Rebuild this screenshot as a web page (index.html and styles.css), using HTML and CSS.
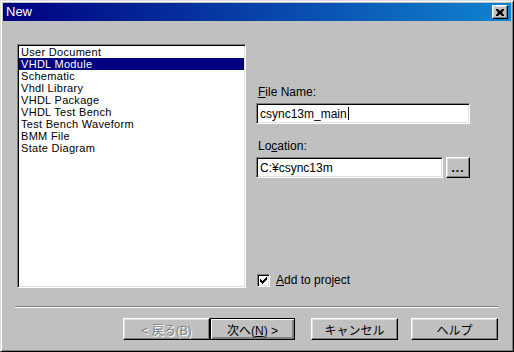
FILE: index.html
```html
<!DOCTYPE html>
<html lang="ja">
<head>
  <meta charset="UTF-8" />
  <title>New</title>
  <link rel="stylesheet" href="styles.css">
</head>
<body>
  <div class="window">
    <div class="titlebar">
      <span class="title">New</span>
      <button class="close-btn">
        <svg width="8" height="7" viewBox="0 0 8 7"><path d="M0 0h2l2 2 2-2h2v1L6 3.5 8 6v1H6L4 5 2 7H0V6l2-2.5L0 1z" fill="#000"/></svg>
      </button>
    </div>

    <div class="dialog-body">
      <div class="main">
        <ul class="listbox">
          <li>User Document</li>
          <li class="selected">VHDL Module</li>
          <li>Schematic</li>
          <li>Vhdl Library</li>
          <li>VHDL Package</li>
          <li>VHDL Test Bench</li>
          <li>Test Bench Waveform</li>
          <li>BMM File</li>
          <li>State Diagram</li>
        </ul>

        <div class="side">
          <label class="label"><u>F</u>ile Name:</label>
          <div class="field">csync13m_main<span class="caret"></span></div>

          <label class="label location-label">Lo<u>c</u>ation:</label>
          <div class="field-row">
            <div class="field short">C:¥csync13m</div>
            <button class="btn browse">...</button>
          </div>

          <label class="check">
            <span class="check-box">
              <svg width="7" height="7" viewBox="0 0 7 7"><path d="M0 2h1v1h1v1h1V3h1V2h1V1h1V0h1v3h-1v1h-1v1h-1v1h-1v1H2V6H1V5H0z" fill="#000"/></svg>
            </span>
            <span><u>A</u>dd to project</span>
          </label>
        </div>
      </div>

      <div class="separator"></div>

      <div class="buttons">
        <button class="btn wide disabled">&lt; 戻る(B)</button>
        <button class="btn wide default">次へ(<u>N</u>) &gt;</button>
        <button class="btn wide cancel">キャンセル</button>
        <button class="btn wide help">ヘルプ</button>
      </div>
    </div>
  </div>
</body>
</html>
```

FILE: styles.css
```css
* {
  box-sizing: border-box;
}

body {
  margin: 0;
  background: #c0c0c0;
  font-family: 'Liberation Sans', 'Noto Sans CJK JP', sans-serif;
  font-size: 12px;
  color: #000;
}

.window {
  width: 514px;
  height: 352px;
  background: #c0c0c0;
  border: 1px solid;
  border-color: #dfdfdf #000 #000 #dfdfdf;
  box-shadow: inset 1px 1px #fff, inset -1px -1px #808080;
  padding: 2px;
  display: flex;
  flex-direction: column;
}

.titlebar {
  height: 18px;
  background: linear-gradient(to right, #000080, #1084d0);
  display: flex;
  align-items: center;
  padding: 0 3px 0 3px;
}

.title {
  flex: 1;
  color: #fff;
  font-size: 13px;
  line-height: 14px;
}

.close-btn {
  width: 16px;
  height: 14px;
  padding: 0;
  margin: 0;
  background: #c0c0c0;
  border: 1px solid;
  border-color: #fff #000 #000 #fff;
  box-shadow: inset -1px -1px #808080, inset 1px 1px #dfdfdf;
  display: flex;
  align-items: center;
  justify-content: center;
}

.dialog-body {
  flex: 1;
  padding: 23px 0 0 14px;
  display: flex;
  flex-direction: column;
}

.main {
  display: flex;
  gap: 10px;
  height: 244px;
}

.listbox {
  width: 229px;
  height: 244px;
  margin: 0;
  list-style: none;
  background: #fff;
  border: 1px solid;
  border-color: #808080 #fff #fff #808080;
  box-shadow: inset 1px 1px #000, inset -1px -1px #dfdfdf;
  padding: 1px;
  font-size: 11px;
  letter-spacing: 0.3px;
}

.listbox li {
  height: 12px;
  line-height: 12px;
  padding-left: 2px;
  white-space: nowrap;
}

.listbox li.selected {
  background: #000080;
  color: #fff;
}

.side {
  width: 214px;
  display: flex;
  flex-direction: column;
}

.label {
  display: block;
  line-height: 14px;
  height: 14px;
  margin: 41px 0 4px 2px;
}

.location-label {
  margin-top: 15px;
}

.field {
  height: 21px;
  background: #fff;
  border: 1px solid;
  border-color: #808080 #fff #fff #808080;
  box-shadow: inset 1px 1px #000, inset -1px -1px #dfdfdf;
  padding: 0 3px;
  display: flex;
  align-items: center;
  white-space: nowrap;
}

.caret {
  display: inline-block;
  width: 1px;
  height: 13px;
  background: #000;
  margin-left: 1px;
}

.field-row {
  display: flex;
  gap: 3px;
}

.field.short {
  width: 187px;
}

.btn {
  font-family: 'Liberation Sans', 'Noto Sans CJK JP', sans-serif;
  font-size: 12px;
  color: #000;
  background: #c0c0c0;
  border: 1px solid;
  border-color: #fff #000 #000 #fff;
  box-shadow: inset -1px -1px #808080, inset 1px 1px #dfdfdf;
  padding: 0;
  margin: 0;
}

.browse {
  width: 24px;
  height: 21px;
  font-weight: bold;
  letter-spacing: 1px;
  line-height: 12px;
}

.check {
  margin-top: auto;
  margin-bottom: 1px;
  margin-left: 1px;
  display: flex;
  align-items: center;
  gap: 6px;
  line-height: 13px;
}

.check-box {
  width: 13px;
  height: 13px;
  background: #fff;
  border: 1px solid;
  border-color: #808080 #fff #fff #808080;
  box-shadow: inset 1px 1px #000, inset -1px -1px #dfdfdf;
  display: flex;
  align-items: center;
  justify-content: center;
}

.separator {
  margin: 18px 0 0 -2px;
  width: 483px;
  height: 2px;
  border-top: 1px solid #808080;
  border-bottom: 1px solid #fff;
}

.buttons {
  display: flex;
  margin: 10px 0 0 106px;
}

.btn.wide {
  height: 22px;
  width: 87px;
}

.btn.default {
  width: 85px;
  border: 1px solid #000;
  box-shadow: inset 1px 1px #fff, inset -1px -1px #808080, inset -2px -2px #808080;
}

.btn.cancel {
  margin-left: 16px;
}

.btn.help {
  margin-left: 13px;
}

.btn.disabled {
  color: #808080;
  text-shadow: 1px 1px #fff;
}
```
